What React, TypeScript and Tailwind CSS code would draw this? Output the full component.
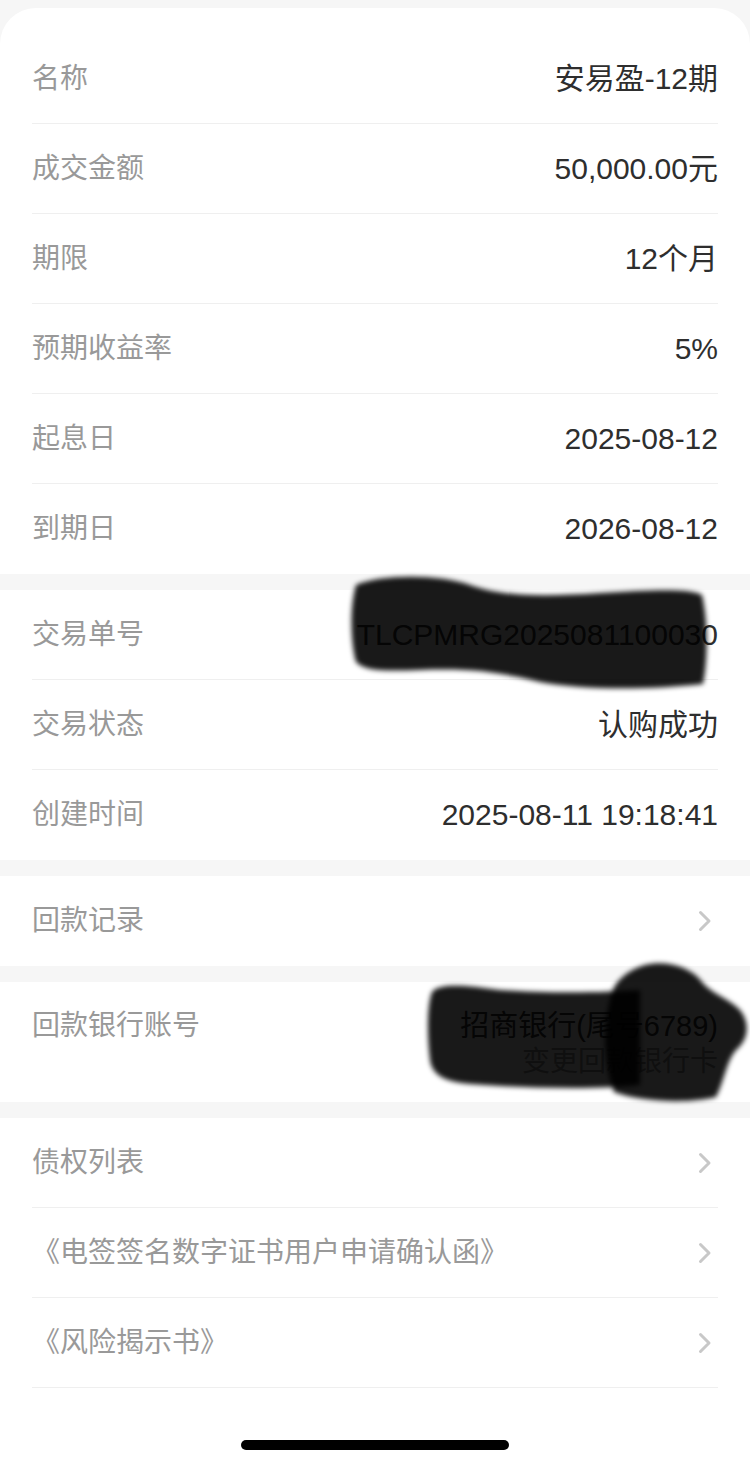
import React from 'react';

const font = "font-['Liberation_Sans','Noto_Sans_CJK_SC',sans-serif]";

const Chevron: React.FC = () => (
  <svg width="14" height="22" viewBox="0 0 14 22" className="mr-[6px] shrink-0">
    <path d="M2.5 2.5 L11 11 L2.5 19.5" fill="none" stroke="#c8c8c8" strokeWidth="3" strokeLinecap="round" strokeLinejoin="round" />
  </svg>
);

const Row: React.FC<{ label: string; value?: string; arrow?: boolean; last?: boolean }> = ({ label, value, arrow, last }) => (
  <div className={`mx-[32px] h-[90px] flex items-center justify-between ${last ? '' : 'border-b border-[#efefef]'}`}>
    <span className="text-[28px] leading-[32px] text-[#999999]">{label}</span>
    {arrow ? <Chevron /> : <span className="text-[30px] leading-[34px] text-[#2e2e2e]">{value}</span>}
  </div>
);

const Band = () => <div className="h-[16px] bg-[#f6f6f6]" />;

export default function App() {
  return (
    <div className={`relative w-[750px] min-h-[1464px] bg-[#f6f6f6] pt-[8px] ${font}`}>
      <div className="bg-white rounded-t-[36px] pt-[26px]">
        <Row label="名称" value="安易盈-12期" />
        <Row label="成交金额" value="50,000.00元" />
        <Row label="期限" value="12个月" />
        <Row label="预期收益率" value="5%" />
        <Row label="起息日" value="2025-08-12" />
        <Row label="到期日" value="2026-08-12" last />
      </div>
      <Band />
      <div className="bg-white">
        <Row label="交易单号" value="TLCPMRG2025081100030" />
        <Row label="交易状态" value="认购成功" />
        <Row label="创建时间" value="2025-08-11 19:18:41" last />
      </div>
      <Band />
      <div className="bg-white">
        <Row label="回款记录" arrow last />
      </div>
      <Band />
      <div className="bg-white h-[120px] px-[32px] pt-[28px] flex justify-between items-start">
        <span className="text-[28px] leading-[32px] text-[#999999]">回款银行账号</span>
        <div className="flex flex-col items-end">
          <span className="text-[29px] leading-[32px] text-[#2e2e2e]">招商银行(尾号6789)</span>
          <span className="mt-[4px] text-[28px] leading-[32px] text-[#999999]">变更回款银行卡</span>
        </div>
      </div>
      <Band />
      <div className="bg-white min-h-[346px] flex flex-col">
        <Row label="债权列表" arrow />
        <Row label="《电签签名数字证书用户申请确认函》" arrow />
        <Row label="《风险揭示书》" arrow />
        <div className="flex-1 flex items-end justify-center pb-[14px]">
          <div className="w-[268px] h-[10px] rounded-full bg-black" />
        </div>
      </div>

      <svg className="absolute inset-0 pointer-events-none" width="750" height="1464" viewBox="0 0 750 1464">
        <defs>
          <filter id="blur" x="-10%" y="-10%" width="120%" height="120%">
            <feGaussianBlur stdDeviation="2.5" />
          </filter>
        </defs>
        <g filter="url(#blur)" fill="#000" fillOpacity="0.9">
          <path d="M356 585 C380 574 440 574 470 585 C500 596 540 597 600 593 C650 590 690 588 702 595 C708 620 708 660 703 684 C650 690 580 690 540 682 C500 672 470 668 420 670 C390 671 365 672 356 662 C350 640 350 605 356 585 Z" />
          <path d="M432 992 C440 982 470 986 500 990 C560 994 610 992 640 990 L640 1085 C600 1090 520 1088 470 1084 C445 1082 432 1075 430 1060 C427 1035 427 1005 432 992 Z" />
          <path d="M610 1000 C612 982 628 970 645 965 C665 960 690 966 702 982 C712 994 728 998 740 1010 C750 1022 749 1040 736 1050 C726 1062 724 1082 716 1097 C690 1104 640 1102 614 1092 C603 1062 603 1026 610 1000 Z" />
        </g>
      </svg>
    </div>
  );
}
